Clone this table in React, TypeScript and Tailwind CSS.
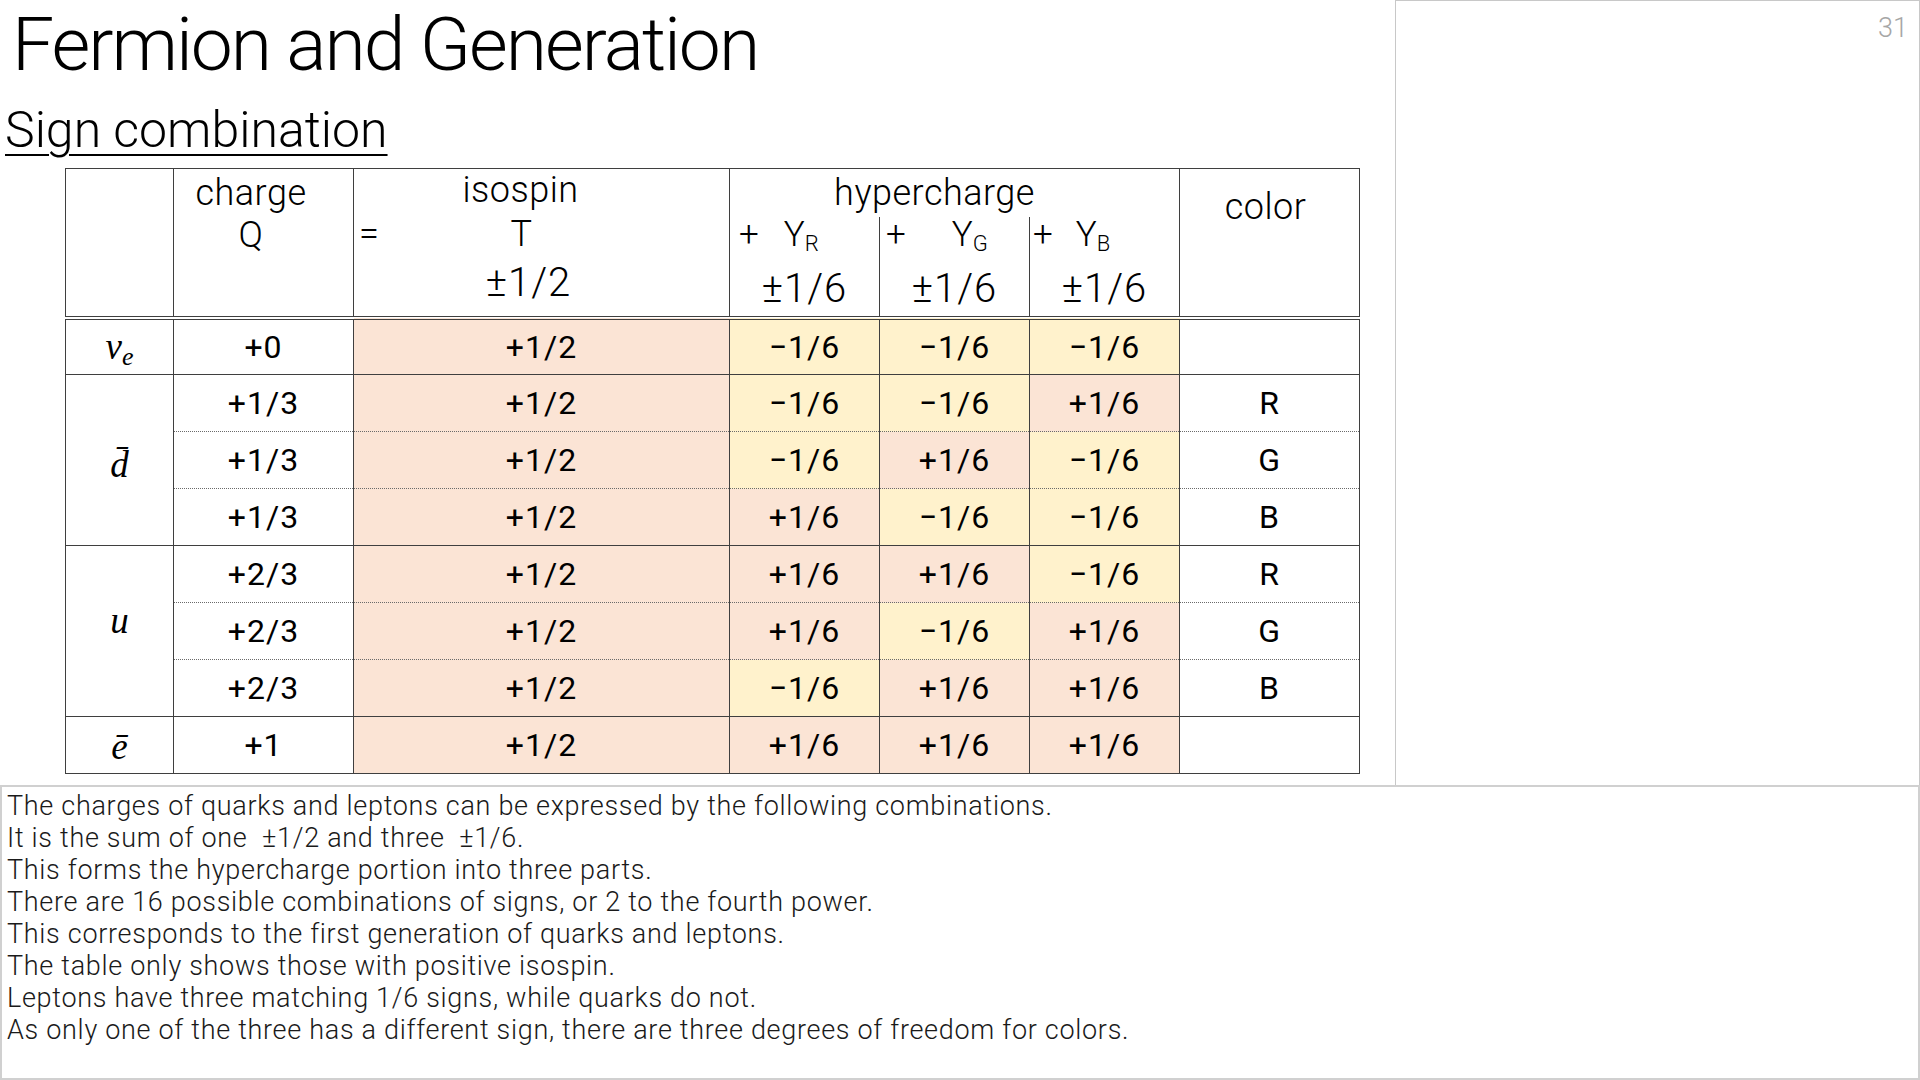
import React from "react";

type Sign = "+" | "-";

const rows: {
  particle: string | null;
  span?: number;
  charge: string;
  hyp: [Sign, Sign, Sign];
  color: string;
  groupStart: boolean;
  last?: boolean;
}[] = [
  { particle: "nu", span: 1, charge: "+0", hyp: ["-", "-", "-"], color: "", groupStart: true },
  { particle: "d", span: 3, charge: "+1/3", hyp: ["-", "-", "+"], color: "R", groupStart: true },
  { particle: null, charge: "+1/3", hyp: ["-", "+", "-"], color: "G", groupStart: false },
  { particle: null, charge: "+1/3", hyp: ["+", "-", "-"], color: "B", groupStart: false },
  { particle: "u", span: 3, charge: "+2/3", hyp: ["+", "+", "-"], color: "R", groupStart: true },
  { particle: null, charge: "+2/3", hyp: ["+", "-", "+"], color: "G", groupStart: false },
  { particle: null, charge: "+2/3", hyp: ["-", "+", "+"], color: "B", groupStart: false },
  { particle: "e", span: 1, charge: "+1", hyp: ["+", "+", "+"], color: "", groupStart: true, last: true },
];

function Particle({ kind }: { kind: string }) {
  const cls = "font-['Liberation_Serif',serif] italic text-[37px] leading-none";
  if (kind === "nu")
    return (
      <span className={cls}>
        ν<sub className="text-[26px]">e</sub>
      </span>
    );
  if (kind === "d") return <span className={`${cls} block pt-[8px]`}>{"d\u0304"}</span>;
  if (kind === "u") return <span className={`${cls} block pb-[22px]`}>u</span>;
  return <span className={`${cls} block pt-[3px]`}>ē</span>;
}

const notes = [
  "The charges of quarks and leptons can be expressed by the following combinations.",
  "It is the sum of one \u00a0±1/2 and three \u00a0±1/6.",
  "This forms the hypercharge portion into three parts.",
  "There are 16 possible combinations of signs, or 2 to the fourth power.",
  "This corresponds to the first generation of quarks and leptons.",
  "The table only shows those with positive isospin.",
  "Leptons have three matching 1/6 signs, while quarks do not.",
  "As only one of the three has a different sign, there are three degrees of freedom for colors.",
];

export default function App() {
  return (
    <div className="w-[1920px] h-[1080px] bg-white flex flex-col font-['Roboto',sans-serif] text-black overflow-hidden">
      <div className="flex h-[785px]">
        <div className="w-[1395px] flex flex-col">
          <div className="pl-[12px] text-[75px] leading-[88px] font-light tracking-[-2px] whitespace-nowrap">
            Fermion and Generation
          </div>
          <div className="mt-[13px] pl-[5px] text-[50px] leading-[58px] font-light whitespace-nowrap">
            <span className="underline decoration-2 underline-offset-[7px]">Sign combination</span>
          </div>
          <div className="mt-[9px] ml-[65px]">
            <table className="table-fixed border-collapse w-[1294px]">
              <colgroup>
                <col className="w-[108px]" />
                <col className="w-[180px]" />
                <col className="w-[376px]" />
                <col className="w-[150px]" />
                <col className="w-[150px]" />
                <col className="w-[150px]" />
                <col className="w-[180px]" />
              </colgroup>
              <thead>
                <tr className="h-[48px]">
                  <th
                    rowSpan={2}
                    className="p-0 [border-top:1px_solid_#3f3f3f] [border-left:1px_solid_#3f3f3f] [border-right:1px_solid_#3f3f3f] [border-bottom:4px_double_#3f3f3f]"
                  ></th>
                  <th
                    rowSpan={2}
                    className="p-0 align-top font-light text-[36px] tracking-[0.5px] [border-top:1px_solid_#3f3f3f] [border-left:1px_solid_#3f3f3f] [border-right:1px_solid_#3f3f3f] [border-bottom:4px_double_#3f3f3f]"
                  >
                    <div className="ml-[14px] w-[126px] flex flex-col items-center pt-[3px] leading-[42px]">
                      <span>charge</span>
                      <span>Q</span>
                    </div>
                  </th>
                  <th
                    rowSpan={2}
                    className="p-0 align-top font-light text-[36px] tracking-[0.5px] [border-top:1px_solid_#3f3f3f] [border-left:1px_solid_#3f3f3f] [border-right:1px_solid_#3f3f3f] [border-bottom:4px_double_#3f3f3f]"
                  >
                    <div className="flex flex-col">
                      <div className="h-[44px] leading-[42px] pr-[42px] text-center">isospin</div>
                      <div className="h-[44px] leading-[42px] flex">
                        <span className="w-[26px] pl-[5px] text-left">=</span>
                        <span className="flex-1 text-center">T</span>
                        <span className="w-[66px]"></span>
                      </div>
                      <div className="leading-[52px] pr-[26px] text-center text-[40px] tracking-[1px]">±1/2</div>
                    </div>
                  </th>
                  <th
                    colSpan={3}
                    className="p-0 pr-[40px] align-middle font-light text-[36px] tracking-[0.5px] leading-[40px] [border-top:1px_solid_#3f3f3f] [border-left:1px_solid_#3f3f3f] [border-right:1px_solid_#3f3f3f]"
                  >
                    hypercharge
                  </th>
                  <th
                    rowSpan={2}
                    className="p-0 align-top font-light text-[36px] tracking-[0.5px] [border-top:1px_solid_#3f3f3f] [border-left:1px_solid_#3f3f3f] [border-right:1px_solid_#3f3f3f] [border-bottom:4px_double_#3f3f3f]"
                  >
                    <div className="pt-[18px] pr-[8px] leading-[40px] text-center">color</div>
                  </th>
                </tr>
                <tr className="h-[101px]">
                  {[
                    { sub: "R", pl: "pl-[9px]", ml: "ml-[25px]" },
                    { sub: "G", pl: "pl-[6px]", ml: "ml-[46px]" },
                    { sub: "B", pl: "pl-[3px]", ml: "ml-[23px]" },
                  ].map((h) => (
                    <th
                      key={h.sub}
                      className="p-0 align-top font-light text-[35px] [border-left:1px_solid_#3f3f3f] [border-right:1px_solid_#3f3f3f] [border-bottom:4px_double_#3f3f3f]"
                    >
                      <div className={`flex items-baseline h-[36px] leading-[36px] ${h.pl}`}>
                        <span>+</span>
                        <span className={h.ml}>
                          Y<sub className="text-[22px]">{h.sub}</sub>
                        </span>
                      </div>
                      <div className="mt-[17px] leading-[38px] text-center text-[40px] tracking-[1px]">±1/6</div>
                    </th>
                  ))}
                </tr>
              </thead>
              <tbody>
                {rows.map((r, i) => {
                  const top = r.groupStart
                    ? "[border-top:1px_solid_#3f3f3f]"
                    : "[border-top:1px_dotted_#6a6a6a]";
                  const bottom = r.last ? "[border-bottom:1px_solid_#3f3f3f]" : "";
                  const base = `p-0 h-[57px] text-center align-middle text-[32px] tracking-[1px] ${top} ${bottom} [border-left:1px_solid_#3f3f3f] [border-right:1px_solid_#3f3f3f]`;
                  return (
                    <tr key={i}>
                      {r.particle !== null && (
                        <td
                          rowSpan={r.span}
                          className="p-0 text-center align-middle [border-top:1px_solid_#3f3f3f] [border-left:1px_solid_#3f3f3f] [border-right:1px_solid_#3f3f3f] [border-bottom:1px_solid_#3f3f3f]"
                        >
                          <Particle kind={r.particle} />
                        </td>
                      )}
                      <td className={base}>{r.charge}</td>
                      <td className={`${base} bg-[#fbe4d5]`}>+1/2</td>
                      {r.hyp.map((s, j) => (
                        <td key={j} className={`${base} ${s === "+" ? "bg-[#fbe4d5]" : "bg-[#fff2cc]"}`}>
                          {s === "+" ? "+1/6" : "\u22121/6"}
                        </td>
                      ))}
                      <td className={base}>{r.color}</td>
                    </tr>
                  );
                })}
              </tbody>
            </table>
          </div>
        </div>
        <div className="flex-1 border-l border-t border-r border-[#c8c8c8] flex justify-end items-start">
          <span className="mt-[14px] mr-[11px] text-[27px] leading-[27px] font-light text-[#a6a6a6]">31</span>
        </div>
      </div>
      <div className="flex-1 border-2 border-[#d0d0d0] pl-[5px] pt-[3px] text-[27px] leading-[32px] tracking-[0.7px] font-light text-[#1a1a1a]">
        {notes.map((n, i) => (
          <div key={i} className="whitespace-nowrap">
            {n}
          </div>
        ))}
      </div>
    </div>
  );
}
